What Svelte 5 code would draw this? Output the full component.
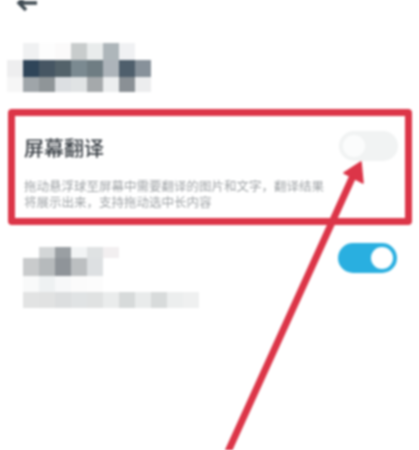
<script lang="ts">
  // mosaic colours, row by row
  const titleCells = [
    ['#fff', '#f0f1f2', '#fdfdfd', '#fbfafa', '#c8cccc', '#e9ecec', '#aeb6ba', '#f0f1f3', '#fff'],
    ['#eeeeef', '#2f4559', '#465663', '#53626a', '#7b8a91', '#6f7d83', '#adb4ba', '#4f5f6c', '#87919a'],
    ['#f6f6f6', '#9fa5a9', '#8f9598', '#dcdfe2', '#e0e3e4', '#a5a9ab', '#eceeef', '#8a9095', '#ecedee']
  ];

  const rowCells = [
    ['#fff', '#d3d6d7', '#9a9fa3', '#f2f4f5', '#dfe2e3', '#f2eff0', '#fff', '#fff', '#fff', '#fff', '#fff'],
    ['#c9cbcc', '#b6babc', '#8f9499', '#bcbfc1', '#dde0e2', '#fff', '#fff', '#fff', '#fff', '#fff', '#fff'],
    ['#f9fafa', '#eef1f2', '#f7f8f9', '#fbfbfb', '#fcfcfc', '#fff', '#fff', '#fff', '#fff', '#fff', '#fff'],
    ['#e2e3e3', '#e1e2e2', '#dcdedf', '#e0e3e4', '#e0e2e2', '#eaecec', '#d7dada', '#e9ebeb', '#d8dbdb', '#eceeee', '#eff0f0']
  ];
</script>

<div class="page">
  <div class="content">
    <svg class="back" viewBox="0 0 22 20" width="22" height="20" aria-hidden="true">
      <path d="M21 10H3M10 3 3 10l7 7" fill="none" stroke="#3f4a52" stroke-width="3.5" />
    </svg>

    <div class="mosaic title-mosaic">
      {#each titleCells as row}
        <div class="mosaic-row">
          {#each row as c}
            <span class="cell" style="background: {c}"></span>
          {/each}
        </div>
      {/each}
    </div>

    <section class="highlight">
      <div class="setting-head">
        <h2>屏幕翻译</h2>
        <span class="toggle off"><span class="knob"></span></span>
      </div>
      <p>拖动悬浮球至屏幕中需要翻译的图片和文字，翻译结果<br />将展示出来，支持拖动选中长内容</p>
    </section>

    <div class="setting-row">
      <div class="mosaic row-mosaic">
        {#each rowCells as row}
          <div class="mosaic-row">
            {#each row as c}
              <span class="cell" style="background: {c}"></span>
            {/each}
          </div>
        {/each}
      </div>
      <span class="toggle on"><span class="knob"></span></span>
    </div>
  </div>

  <!-- annotation arrow over the screenshot -->
  <svg class="arrow" viewBox="0 0 419 450" width="419" height="450" aria-hidden="true">
    <path d="M226 456 353 176" fill="none" stroke="#dc3548" stroke-width="7" />
    <path d="M361 162 344 173 363 183Z" fill="#dc3548" stroke="#dc3548" stroke-width="1.5" stroke-linejoin="round" />
  </svg>
</div>

<style>
  :global(body) {
    margin: 0;
    background: #fff;
  }

  .page {
    position: relative;
    width: 419px;
    height: 450px;
    overflow: hidden;
    background: #fff;
    font-family: "Liberation Sans", "Noto Sans CJK SC", sans-serif;
    filter: blur(0.8px);
  }

  .back {
    display: block;
    margin: -7px 0 0 16px;
  }

  .mosaic-row {
    display: flex;
  }

  .cell {
    width: 16px;
    flex: none;
  }

  .title-mosaic {
    margin: 30px 0 0 7px;
  }

  .title-mosaic .mosaic-row {
    height: 17px;
  }

  .title-mosaic .mosaic-row:last-child {
    height: 15px;
  }

  .highlight {
    box-sizing: border-box;
    width: 404px;
    height: 116px;
    margin: 17px 0 0 8px;
    padding: 17px 7px 0 9px;
    border: 7px solid #dc3548;
    border-radius: 4px;
  }

  .setting-head {
    display: flex;
    justify-content: space-between;
    align-items: flex-start;
    height: 44px;
  }

  h2 {
    margin: 4px 0 0;
    font-size: 20px;
    line-height: 24px;
    font-weight: 500;
    color: #3c4248;
  }

  p {
    margin: 3px 0 0;
    font-size: 12.5px;
    line-height: 15.5px;
    color: #9fa3a6;
    white-space: nowrap;
  }

  .toggle {
    display: flex;
    box-sizing: border-box;
    width: 59px;
    height: 30px;
    padding: 4px;
    border-radius: 15px;
    flex: none;
  }

  .highlight .toggle {
    margin: -2px 0 0 0;
  }

  .knob {
    width: 22px;
    height: 22px;
    border-radius: 50%;
    background: #fff;
  }

  .toggle.off {
    background: #f1f3f3;
  }

  .toggle.off .knob {
    background: #fbfcfc;
  }

  .toggle.on {
    background: #29afe0;
    justify-content: flex-end;
  }

  .setting-row {
    display: flex;
    justify-content: space-between;
    align-items: flex-start;
    margin-top: 18px;
    padding: 0 22px 0 23px;
  }

  .row-mosaic {
    margin-top: 4px;
  }

  .row-mosaic .mosaic-row:nth-child(1) {
    height: 11px;
  }

  .row-mosaic .mosaic-row:nth-child(2) {
    height: 18px;
  }

  .row-mosaic .mosaic-row:nth-child(3),
  .row-mosaic .mosaic-row:nth-child(4) {
    height: 16px;
  }

  .arrow {
    position: absolute;
    top: 0;
    left: 0;
  }
</style>
